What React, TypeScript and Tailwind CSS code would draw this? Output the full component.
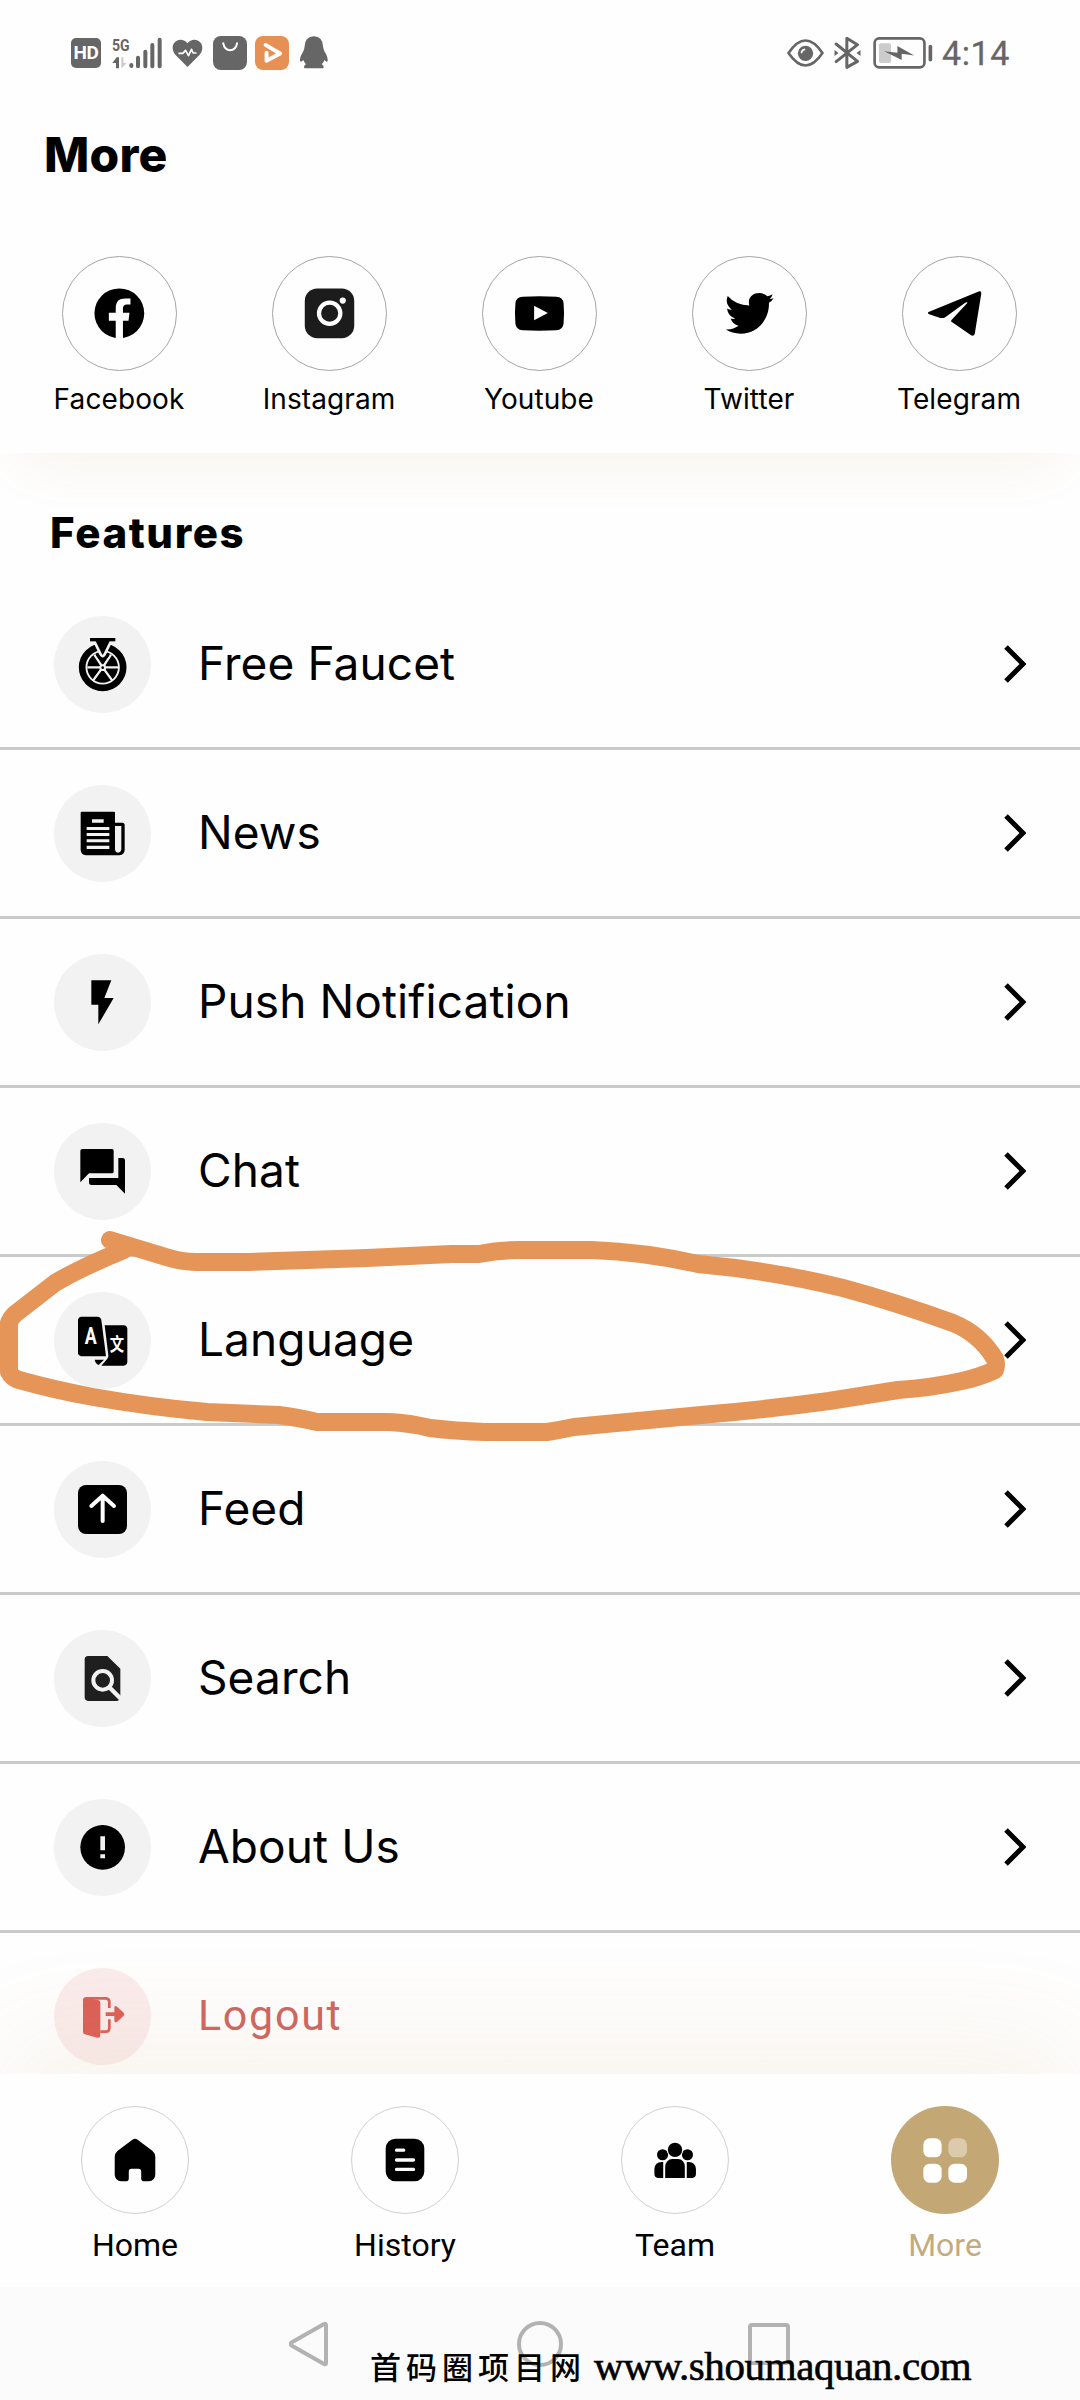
import type { ReactNode } from "react";

const socials = [
    {
        name: "Facebook",
        icon: (
            <svg viewBox="67 48 345 345" className="size-full">
                <circle cx="239" cy="220" r="76" />
                <path
                    fill="#fff"
                    d="M228 298V243H207V218H228V205C228 184 238 175 257 175H273V193H264C253 193 250 198 250 207V218H270L267 243H250V298Z"
                />
            </svg>
        ),
    },
    {
        name: "Instagram",
        icon: (
            <svg viewBox="696 48 345 345" className="size-full">
                <rect x="793" y="144" width="151" height="152" rx="38" fill="#1c1c1c" />
                <circle cx="869" cy="220" r="32.5" fill="none" stroke="#fff" strokeWidth="13" />
                <circle cx="909" cy="181" r="9.5" fill="#fff" />
            </svg>
        ),
    },
    {
        name: "Youtube",
        icon: (
            <svg viewBox="1326 48 345 345" className="size-full">
                <path d="M1447 169Q1498 166 1550 169Q1570 170 1572 189Q1575 220 1572 252Q1570 271 1550 272Q1498 275 1447 272Q1427 271 1425 252Q1422 220 1425 189Q1427 170 1447 169Z" />
                <path fill="#fff" d="M1482 197L1524 219L1482 241Z" />
            </svg>
        ),
    },
    {
        name: "Twitter",
        icon: (
            <svg viewBox="396 48 345 345" className="size-full">
                <path d="M502 167Q527 195 568 196C561 172 579 158 598 158Q614 159 623 168Q631 167 639 162Q637 171 630 176Q636 176 642 174Q637 183 628 188C629 240 592 282 542 282Q515 281 496 269Q519 270 535 258Q517 254 511 236Q518 238 525 236Q502 227 500 205Q506 209 514 209Q492 190 502 167Z" />
            </svg>
        ),
    },
    {
        name: "Telegram",
        icon: (
            <svg viewBox="1026 48 345 345" className="size-full">
                <path d="M1104 216L1257 153Q1266 151 1265 160L1245 283Q1242 291 1234 287L1174 246Q1171 243 1174 240L1223 188Q1222 184 1216 188L1156 231Q1149 236 1140 234L1106 223Q1099 220 1104 216Z" />
            </svg>
        ),
    },
];

const features: { name: string; icon: ReactNode }[] = [
    {
        name: "Free Faucet",
        icon: (
            <svg viewBox="162 528 291 291" className="size-full">
                <circle cx="308" cy="682" r="61.5" fill="none" stroke="#000" strokeWidth="20" />
                <circle cx="308" cy="682" r="46" />
                <path
                    d="M262 682H354M308 682L283 644M308 682L333 644M308 682L279 722M308 682L337 722"
                    stroke="#f2f2f2"
                    strokeWidth="7"
                />
                <circle cx="308" cy="683" r="10" fill="#f2f2f2" />
                <circle cx="308" cy="683" r="4" />
                <path
                    d="M280 598H336L313 645Q308 652 303 645Z"
                    stroke="#f2f2f2"
                    strokeWidth="8"
                />
                <path d="M291 644L308 665L325 644" fill="none" stroke="#000" strokeWidth="8" />
                <rect x="270" y="594" width="76" height="10" />
            </svg>
        ),
    },
    {
        name: "News",
        icon: (
            <svg viewBox="162 1035 291 291" className="size-full">
                <path d="M245 1115H342Q345 1115 345 1118V1148H368Q374 1149 374 1154V1230Q373 1245 358 1246H258Q243 1245 242 1230V1118Q242 1115 245 1115Z" />
                <path
                    fill="#f2f2f2"
                    d="M276 1138H311V1148H276ZM260 1161H328V1170H260ZM260 1179H328V1188H260ZM260 1198H328V1207H260ZM260 1217H328V1227H260ZM345 1158H364V1229Q362 1237 354 1238Q346 1237 345 1229Z"
                />
            </svg>
        ),
    },
    {
        name: "Push Notification",
        icon: (
            <svg viewBox="162 102 291 291" className="size-full">
                <path d="M274 181H334L313 234H341L295 313V254H274Z" />
            </svg>
        ),
    },
    {
        name: "Chat",
        icon: (
            <svg viewBox="162 609 291 291" className="size-full">
                <path d="M247 687H336Q341 687 341 692V755Q341 760 336 760H267L241 787V693Q241 687 247 687Z" />
                <path d="M355 714H369Q375 715 375 721V821L349 795H273Q267 794 267 788V774H355Z" />
            </svg>
        ),
    },
    {
        name: "Language",
        icon: (
            <svg viewBox="162 274 291 291" className="size-full">
                <path d="M244 348H293Q302 349 304 358L318 467H243Q235 466 234 458V358Q235 349 244 348Z" />
                <path d="M316 374H371Q381 375 382 384V484Q381 494 371 495H304L322 474Q326 470 325 463L314 374Z" />
                <path d="M284 477H312L296 493Q286 489 284 477Z" />
                <text
                    x="272"
                    y="430"
                    textAnchor="middle"
                    fontSize="70"
                    fontWeight="700"
                    fill="#fff"
                    textLength="36"
                    lengthAdjust="spacingAndGlyphs"
                    className="font-[Roboto,sans-serif]"
                >
                    A
                </text>
                <text
                    x="351"
                    y="452"
                    textAnchor="middle"
                    fontSize="54"
                    fontWeight="700"
                    fill="#fff"
                    className="font-['Noto_Sans_CJK_SC',sans-serif]"
                    textLength="43"
                    lengthAdjust="spacingAndGlyphs"
                >
                    文
                </text>
            </svg>
        ),
    },
    {
        name: "Feed",
        icon: (
            <svg viewBox="162 63 291 291" className="size-full">
                <rect x="234" y="135" width="147" height="147" rx="24" />
                <path
                    d="M308 243V168M274 198L308 167L342 198"
                    fill="none"
                    stroke="#fff"
                    strokeWidth="12"
                    strokeLinecap="round"
                    strokeLinejoin="round"
                />
            </svg>
        ),
    },
    {
        name: "Search",
        icon: (
            <svg viewBox="162 570 291 291" className="size-full">
                <path
                    fill="#1f1f1f"
                    d="M264 648H322L361 686V772Q359 783 349 783H264Q254 782 254 772V658Q254 649 264 648Z"
                />
                <circle cx="308" cy="721" r="28" fill="none" stroke="#f2f2f2" strokeWidth="12" />
                <path d="M327 741L364 778" stroke="#f2f2f2" strokeWidth="13" />
            </svg>
        ),
    },
    {
        name: "About Us",
        icon: (
            <svg viewBox="162 1077 291 291" className="size-full">
                <circle cx="308" cy="1222" r="67" />
                <path fill="#f2f2f2" d="M301 1189H315V1231H301ZM301 1243H315V1255H301Z" />
            </svg>
        ),
    },
];

const tabs = [
    {
        name: "Home",
        icon: (
            <svg viewBox="243 558 324 324" className="size-full">
                <path d="M397 658Q405 652 413 658L458 692Q467 700 467 711V765Q466 784 447 785H433Q425 785 424 777V754Q423 747 416 747H394Q387 747 386 754V777Q385 785 377 785H363Q344 784 343 765V711Q343 700 352 692Z" />
            </svg>
        ),
    },
    {
        name: "History",
        icon: (
            <svg viewBox="1053 558 324 324" className="size-full">
                <rect x="1156" y="655" width="118" height="130" rx="30" />
                <path
                    d="M1189 690H1211M1189 720H1241M1189 749H1241"
                    stroke="#fff"
                    strokeWidth="10"
                    strokeLinecap="round"
                />
            </svg>
        ),
    },
    {
        name: "Team",
        icon: (
            <svg viewBox="243 137 324 324" className="size-full">
                <circle cx="367" cy="283" r="17" />
                <circle cx="443" cy="283" r="17" />
                <circle cx="405" cy="268" r="25" fill="#fff" />
                <circle cx="405" cy="268" r="22" />
                <path d="M369 354H353Q342 353 342 342V326Q344 305 364 305H369ZM441 354H458Q469 353 469 342V326Q467 305 447 305H441Z" />
                <path d="M375 354V320Q377 297 397 296H414Q434 297 435 320V354Z" />
            </svg>
        ),
    },
    {
        name: "More",
        active: true,
        icon: (
            <svg viewBox="1053 137 324 324" className="size-full" fill="#fff">
                <rect x="1150" y="234" width="55" height="57" rx="19" />
                <rect x="1225" y="234" width="56" height="57" rx="19" opacity=".4" />
                <rect x="1150" y="310" width="55" height="57" rx="19" />
                <rect x="1225" y="310" width="56" height="57" rx="19" />
            </svg>
        ),
    },
];

function StatusBar() {
    return (
        <div className="flex h-[105px] items-center pr-[70px] pl-[71px] text-[#666]">
            <div className="flex size-[30px] items-center justify-center rounded-[5px] bg-[#666] font-[Roboto,sans-serif] text-[19px] leading-[30px] font-bold tracking-[-0.5px] text-white">
                HD
            </div>
            <svg
                viewBox="215 48 150 96"
                className="ml-[11px] h-8 w-[50px] overflow-visible"
                fill="currentColor"
            >
                <text
                    x="215"
                    y="89"
                    fontSize="52"
                    fontWeight="700"
                    textLength="53"
                    lengthAdjust="spacingAndGlyphs"
                    className="font-[Roboto,sans-serif]"
                >
                    5G
                </text>
                <path d="M216 126L229 109H236V142H227V126Z" />
                <path d="M243 109V142L259 126H249V109Z" opacity=".35" />
                <path
                    d="M273 132V135M293 110V136M315 92V136M336 72V136M358 56V136"
                    stroke="currentColor"
                    strokeWidth="12"
                    strokeLinecap="round"
                />
            </svg>
            <svg viewBox="398 48 92 96" className="ml-[10px] h-8 w-[31px]" fill="currentColor">
                <path d="M444 138L409 103C390 82 402 56 423 56Q436 56 444 67Q452 56 465 56C486 56 498 82 479 103Z" />
                <path
                    d="M417 97H430L438 88L447 104L456 85L461 96H471"
                    fill="none"
                    stroke="#fff"
                    strokeWidth="5"
                    strokeLinejoin="round"
                />
            </svg>
            <svg viewBox="518 44 103 103" className="ml-[10px] size-[34px]" fill="currentColor">
                <rect x="518" y="44" width="103" height="103" rx="24" />
                <path
                    d="M549 66Q553 87 570 87Q587 87 591 66"
                    fill="none"
                    stroke="#fff"
                    strokeWidth="6"
                    strokeLinecap="round"
                />
            </svg>
            <svg viewBox="645 44 103 103" className="ml-2 size-[34px]">
                <rect x="645" y="44" width="103" height="103" rx="24" fill="#e69053" />
                <path
                    d="M677 71L721 97L680 119V95"
                    fill="none"
                    stroke="#fff"
                    strokeWidth="12"
                    strokeLinecap="round"
                    strokeLinejoin="round"
                />
            </svg>
            <svg viewBox="780 46 85 100" className="ml-[11px] h-[33px] w-[28px]" fill="currentColor">
                <path d="M822 47Q849 48 850 78Q851 86 854 92Q865 109 864 121Q862 128 854 119Q852 127 846 132Q855 138 850 144H794Q789 138 798 132Q793 127 790 119Q782 128 780 121Q779 109 790 92Q793 86 794 78Q795 48 822 47Z" />
            </svg>
            <svg viewBox="84 50 110 90" className="ml-auto h-[30px] w-[37px]" fill="none" stroke="currentColor">
                <path d="M88 95Q139 20 190 95Q139 170 88 95Z" strokeWidth="8" strokeLinejoin="round" />
                <circle cx="139" cy="96" r="23" fill="currentColor" stroke="none" />
                <path d="M127 96Q127 85 138 84" stroke="#fff" strokeWidth="5" />
            </svg>
            <svg viewBox="227 48 80 96" className="ml-[10px] h-8 w-[27px]" fill="none" stroke="currentColor">
                <path
                    d="M233 69L297 121L265 139V52L297 71L233 122"
                    strokeWidth="9"
                    strokeLinejoin="round"
                    strokeLinecap="round"
                />
                <path d="M228 87L240 96L228 105ZM306 87L294 96L306 105Z" fill="currentColor" stroke="none" />
            </svg>
            <svg viewBox="342 48 180 97" className="ml-[12px] h-8 w-[60px]" fill="none" stroke="currentColor">
                <rect x="346" y="52" width="151" height="88" rx="14" strokeWidth="8" />
                <rect x="359" y="67" width="37" height="60" rx="6" fill="#ccc" stroke="none" />
                <path
                    fill="currentColor"
                    stroke="none"
                    d="M375 91L415 96V75L466 104L428 99V118Z"
                />
                <path d="M515 77V117" strokeWidth="11" strokeLinecap="round" />
            </svg>
            <span className="ml-[9px] font-[Roboto,sans-serif] text-[34px] leading-none tracking-[0.6px] [-webkit-text-stroke:0.3px_#666]">
                4:14
            </span>
        </div>
    );
}

function FeatureRow({ name, icon }: { name: string; icon: ReactNode }) {
    return (
        <li className="flex h-[169px] items-center border-b-3 border-[#cacaca] pr-[54px] pl-[54px]">
            <div className="size-[97px] rounded-full bg-[#f2f2f2]">{icon}</div>
            <span className="-mt-[2px] ml-[47px] text-[46px] tracking-[0.1px]">{name}</span>
            <svg viewBox="0 0 22 38" className="ml-auto h-[38px] w-[22px]">
                <path d="M2 2L19 19L2 36" fill="none" stroke="#000" strokeWidth="5" />
            </svg>
        </li>
    );
}

export default function App() {
    return (
        <div className="relative h-[2400px] w-[1080px] overflow-hidden bg-[#fefefe] font-[Inter,sans-serif] text-black">
            <header className="relative z-10 h-[453px] bg-[#fefefe] shadow-[0_32px_50px_-24px_rgba(200,150,80,0.11)]">
                <StatusBar />
                <h1 className="flex h-[100px] items-center pl-[44px] text-[48px] font-extrabold tracking-[0.2px]">
                    More
                </h1>
                <div className="mt-[51px] flex px-[14px]">
                    {socials.map((s) => (
                        <div key={s.name} className="flex w-[210px] flex-col items-center">
                            <div className="flex size-[115px] items-center justify-center rounded-full border border-[#a5a5a5]">
                                {s.icon}
                            </div>
                            <span className="mt-[10px] text-[28px] leading-9 tracking-[0.1px]">
                                {s.name}
                            </span>
                        </div>
                    ))}
                </div>
            </header>

            <main className="h-[1621px] overflow-hidden">
                <h2 className="relative z-20 flex h-[128px] items-center pt-[31px] pl-[50px] text-[42px] font-extrabold tracking-[1.6px]">
                    Features
                </h2>
                <ul>
                    {features.map((f) => (
                        <FeatureRow key={f.name} name={f.name} icon={f.icon} />
                    ))}
                    <li className="flex h-[166px] items-center pl-[54px]">
                        <div className="size-[97px] rounded-full bg-[#faecec]">
                            <svg viewBox="162 144 291 291" className="size-full" fill="#dc6058">
                                <path d="M249 238Q250 232 258 231L296 241Q301 243 301 250V347Q300 355 292 353L254 343Q249 341 249 335Z" />
                                <path
                                    d="M258 235H318Q328 236 328 246V264M328 298V326Q327 335 318 335H301"
                                    fill="none"
                                    stroke="#dc6058"
                                    strokeWidth="8"
                                />
                                <path d="M317 277H343V262Q345 255 351 260L371 278Q375 282 371 287L351 306Q345 310 343 303V288H317Z" />
                            </svg>
                        </div>
                        <span className="-mt-[2px] ml-[47px] font-[Roboto,sans-serif] text-[43px] tracking-[1.7px] text-[#cd6760]">
                            Logout
                        </span>
                    </li>
                </ul>
            </main>

            <nav className="relative flex h-[213px] bg-[#fefefe] pt-8 font-[Roboto,sans-serif] shadow-[0_-40px_110px_-10px_rgba(200,150,80,0.11)]">
                {tabs.map((t) => (
                    <div key={t.name} className="flex w-[270px] flex-col items-center">
                        <div
                            className={
                                t.active
                                    ? "size-[108px] rounded-full bg-[#c3a775]"
                                    : "size-[108px] rounded-full border border-[#d0d0d0]"
                            }
                        >
                            {t.icon}
                        </div>
                        <span
                            className={
                                t.active
                                    ? "mt-[11px] text-[32px] leading-10 text-[#c3ab80]"
                                    : "mt-[11px] text-[32px] leading-10"
                            }
                        >
                            {t.name}
                        </span>
                    </div>
                ))}
            </nav>

            <footer className="relative flex h-[113px] items-center bg-[#fbfbfb] pl-[288px]">
                <svg viewBox="0 0 40 48" className="h-12 w-10" fill="none" stroke="#b2b2b2">
                    <path
                        d="M3.5 22.5L36 4Q38 3 38 5V43Q38 45 36 44L3.5 25.5Q2 24 3.5 22.5Z"
                        strokeWidth="4"
                        strokeLinejoin="round"
                    />
                </svg>
                <div className="ml-[189px] size-[46px] rounded-full border-4 border-[#b2b2b2]" />
                <div className="ml-[185px] h-[42px] w-[42px] rounded-[4px] border-4 border-[#b2b2b2]" />
            </footer>

            {/* hand drawn ring around the Language row */}
            <svg
                viewBox="0 1200 1080 260"
                className="absolute top-[1200px] left-0 z-30 h-[260px] w-[1080px]"
            >
                <path
                    d="M110 1240L166 1257Q182 1262 196 1262H248L367 1258L451 1254H479Q500 1250 520 1250H592Q645 1252 698 1264Q775 1271 843 1288Q895 1302 953 1323Q980 1334 995 1359Q997 1365 995 1370Q980 1377 962 1381Q930 1388 898 1390L829 1401Q770 1409 712 1414L574 1427Q560 1430 547 1432H485Q455 1431 430 1428Q410 1423 389 1422H317Q295 1417 279 1415L207 1412Q150 1407 93 1397Q55 1390 19 1380Q12 1378 9 1372V1323Q10 1319 15 1314L55 1283Q80 1268 124 1250"
                    fill="none"
                    stroke="#e59557"
                    strokeWidth="18"
                    strokeLinecap="round"
                    strokeLinejoin="round"
                />
            </svg>

            <div className="absolute top-[2341px] left-[370px] z-30 flex items-center whitespace-nowrap leading-[50px]">
                <span className="font-['Noto_Sans_CJK_SC',sans-serif] text-[31px] font-medium tracking-[5px]">
                    首码圈项目网
                </span>
                <span className="ml-[8px] font-['Liberation_Serif',serif] text-[41px] tracking-[-0.4px] [-webkit-text-stroke:0.6px_#000]">
                    www.shoumaquan.com
                </span>
            </div>
        </div>
    );
}
